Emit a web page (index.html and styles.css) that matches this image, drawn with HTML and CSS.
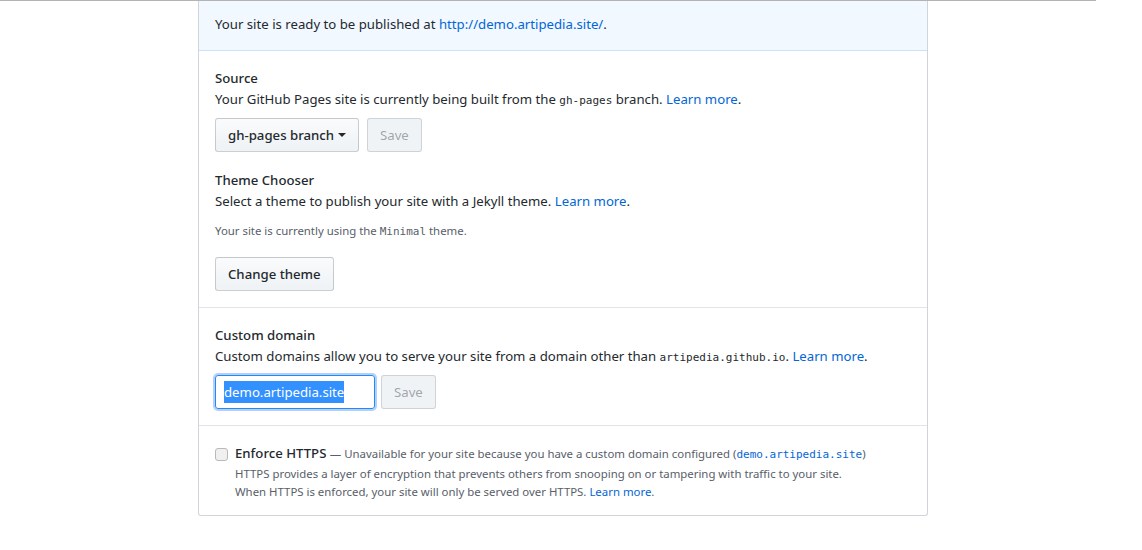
FILE: index.html
```html
<!DOCTYPE html>
<html>
<head>
<meta charset="utf-8">
<link rel="stylesheet" href="styles.css">
</head>
<body>
<div class="topline"></div>
<div class="box">
  <div class="banner">Your site is ready to be published at <a href="#">http://demo.artipedia.site/</a>.</div>
  <div class="section">
    <div class="heading">Source</div>
    <p class="desc">Your GitHub Pages site is currently being built from the <code>gh-pages</code> branch. <a href="#">Learn more</a>.</p>
    <div class="row">
      <button class="btn">gh-pages branch <span class="caret"></span></button>
      <button class="btn disabled">Save</button>
    </div>
    <div class="heading theme">Theme Chooser</div>
    <p class="desc">Select a theme to publish your site with a Jekyll theme. <a href="#">Learn more</a>.</p>
    <p class="note">Your site is currently using the <code>Minimal</code> theme.</p>
    <div class="row">
      <button class="btn">Change theme</button>
    </div>
  </div>
  <div class="section">
    <div class="heading">Custom domain</div>
    <p class="desc">Custom domains allow you to serve your site from a domain other than <code>artipedia.github.io</code>. <a href="#">Learn more</a>.</p>
    <div class="row tight">
      <div class="input"><span class="sel">demo.artipedia.site</span></div>
      <button class="btn disabled">Save</button>
    </div>
  </div>
  <div class="section last">
    <div class="check-row">
      <span class="checkbox"></span>
      <div class="check-body">
        <div class="check-title"><span class="strong">Enforce HTTPS</span> <span class="muted">— Unavailable for your site because you have a custom domain configured (<code class="blue">demo.artipedia.site</code>)</span></div>
        <p class="muted small">HTTPS provides a layer of encryption that prevents others from snooping on or tampering with traffic to your site.<br>When HTTPS is enforced, your site will only be served over HTTPS. <a href="#">Learn more</a>.</p>
      </div>
    </div>
  </div>
</div>
</body>
</html>
```

FILE: styles.css
```css
* { box-sizing: border-box; }
body {
  margin: 0;
  background: #fff;
  font-family: "Noto Sans", "Open Sans", sans-serif;
  font-size: 13.2px;
  line-height: 21px;
  color: #24292e;
}
a { color: #0366d6; text-decoration: none; }
p { margin: 0; }
code {
  font-family: "DejaVu Sans Mono", "Liberation Mono", monospace;
  font-size: 11px;
}
.topline {
  width: 1096px;
  height: 1px;
  background: #b3b3b3;
}
.box {
  margin-left: 198px;
  width: 730px;
  border: 1px solid #d1d5da;
  border-top: none;
  border-radius: 0 0 3px 3px;
}
.banner {
  background: #f1f8ff;
  border-bottom: 1px solid #c8e1ff;
  padding: 13px 16px 15px;
}
.section {
  padding: 17px 16px 16px;
  border-bottom: 1px solid #e1e4e8;
}
.section.last { border-bottom: none; padding-bottom: 14px; }
.heading { font-weight: 500; }
.heading.theme { margin-top: 18px; }
.row {
  display: flex;
  gap: 8px;
  margin-top: 7px;
}
.row.tight { gap: 6px; margin-top: 7px; }
.note {
  font-size: 11.4px;
  line-height: 18px;
  color: #586069;
  margin-top: 10px;
}
.note + .row { margin-top: 16px; }
.btn {
  font-family: inherit;
  font-size: 13.2px;
  font-weight: 500;
  line-height: 20px;
  height: 34px;
  padding: 6px 12px;
  color: #24292e;
  background: linear-gradient(#fafbfc, #eff3f6 90%);
  border: 1px solid rgba(27,31,35,0.2);
  border-radius: 3px;
  display: inline-flex;
  align-items: center;
}
.btn.disabled {
  color: rgba(36,41,46,0.4);
  background: #eff3f6;
  border-color: rgba(27,31,35,0.15);
  font-weight: 400;
}
.caret {
  display: inline-block;
  width: 0;
  height: 0;
  margin-left: 4px;
  border-top: 4px solid #24292e;
  border-left: 4px solid transparent;
  border-right: 4px solid transparent;
}
.input {
  width: 160px;
  height: 34px;
  padding: 5px 8px;
  border: 1px solid #2188ff;
  border-radius: 3px;
  box-shadow: 0 0 0 2px rgba(3,102,214,0.3);
  display: flex;
  align-items: center;
}
.sel {
  background: #3390ff;
  color: #fff;
  line-height: 22px;
}
.check-row { display: flex; gap: 7px; }
.checkbox {
  flex: none;
  width: 13px;
  height: 13px;
  margin-top: 5px;
  border: 1px solid #b9b9b9;
  border-radius: 3px;
  background: #f0f0f0;
}
.check-title .strong { font-weight: 500; }
.muted { color: #586069; }
.check-title .muted { font-size: 11.4px; }
.small { font-size: 11.4px; line-height: 18px; }
.blue { color: #0366d6; }
```
